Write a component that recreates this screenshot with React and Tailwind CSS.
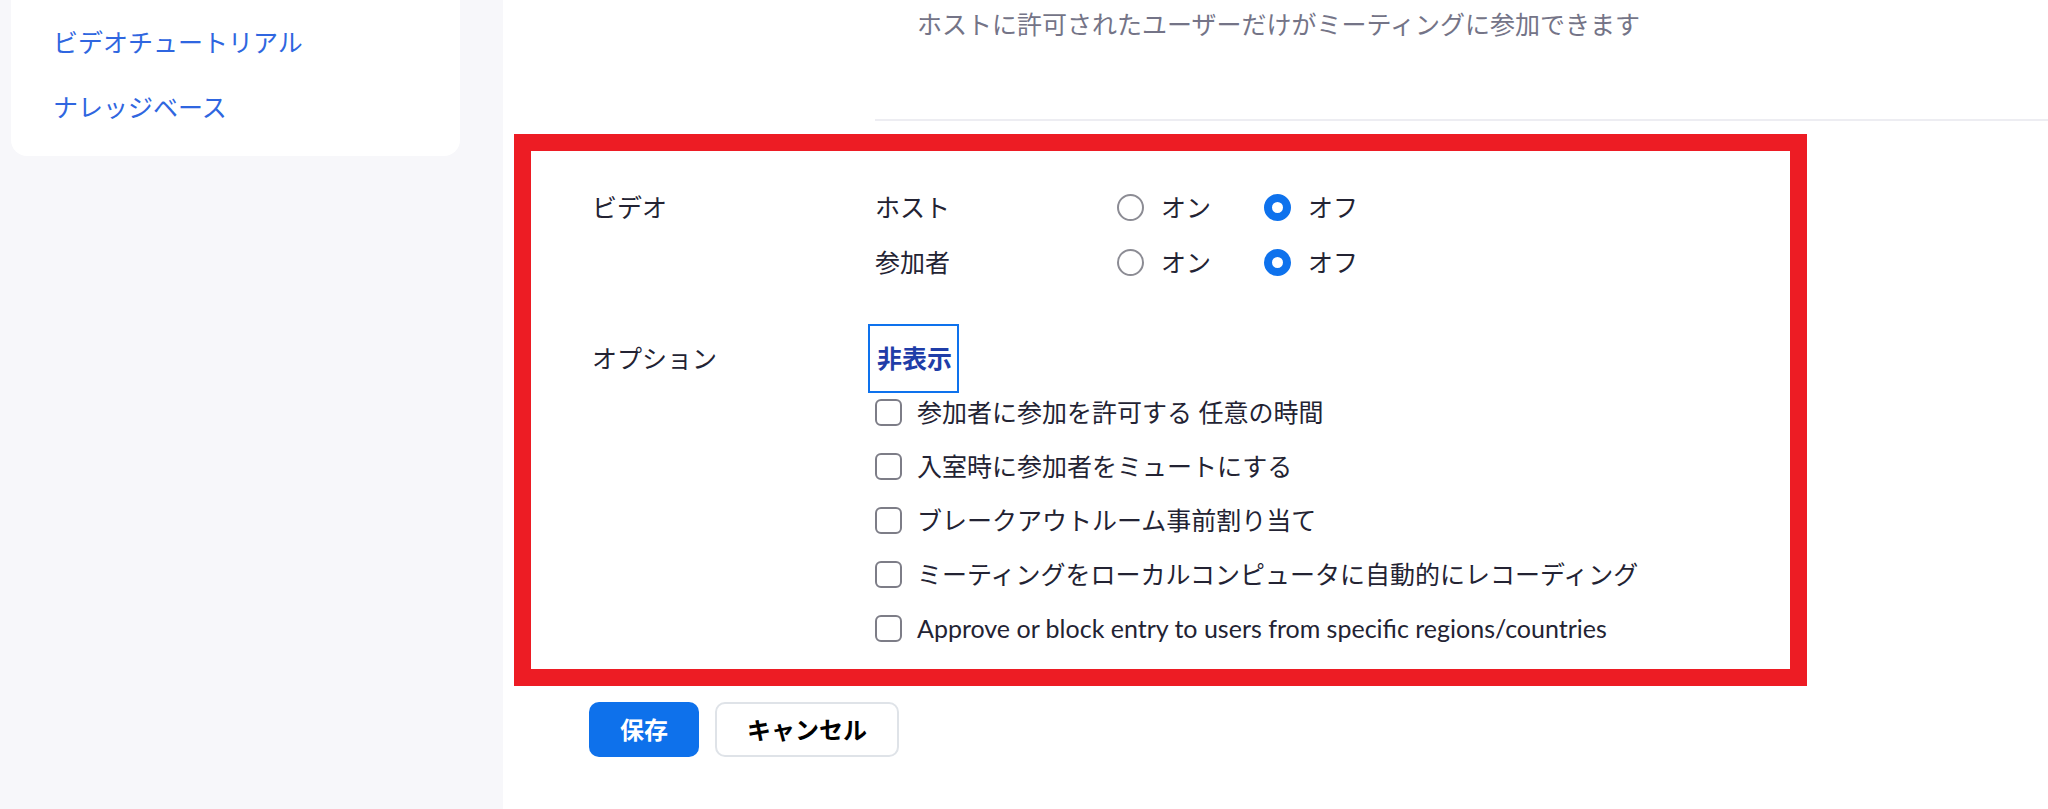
const FONT = { fontFamily: "Lato, 'Noto Sans CJK JP', sans-serif" }

function Radio({ checked, label }) {
  return (
    <label className="flex items-center w-[147px] shrink-0">
      {checked ? (
        <span className="w-[27px] h-[27px] rounded-full border-[8px] border-[#0e72ed] bg-white shrink-0" />
      ) : (
        <span className="w-[27px] h-[27px] rounded-full border-2 border-[#8c8c94] bg-white shrink-0" />
      )}
      <span className="ml-[17px] leading-none">{label}</span>
    </label>
  )
}

function Checkbox({ label }) {
  return (
    <label className="flex items-center h-[38px]">
      <span className="w-[27px] h-[27px] rounded-[6px] border-2 border-[#7d7d87] bg-white shrink-0" />
      <span className="ml-[15px] leading-none whitespace-nowrap">{label}</span>
    </label>
  )
}

export default function App() {
  const options = [
    '参加者に参加を許可する 任意の時間',
    '入室時に参加者をミュートにする',
    'ブレークアウトルーム事前割り当て',
    'ミーティングをローカルコンピュータに自動的にレコーディング',
    'Approve or block entry to users from specific regions/countries',
  ]

  return (
    <div className="flex w-full h-[809px] overflow-hidden bg-white" style={FONT}>
      {/* sidebar */}
      <aside className="w-[503px] shrink-0 bg-[#f7f7fa] pl-[11px] pr-[43px]">
        <div className="bg-white rounded-b-[16px] pt-[10px] pb-[16px] pl-[42px]">
          <a className="h-[65px] flex items-center text-[25px] text-[#2f66e0] leading-none">ビデオチュートリアル</a>
          <a className="h-[65px] flex items-center text-[25px] text-[#2f66e0] leading-none">ナレッジベース</a>
        </div>
      </aside>

      {/* main */}
      <main className="flex-1 min-w-0 text-[#232333] text-[25px]">
        <div className="ml-[372px] h-[121px] border-b-2 border-[#ededf2] pl-[42px] pt-[7px]">
          <p className="text-[25px] leading-[34px] text-[#747487]">ホストに許可されたユーザーだけがミーティングに参加できます</p>
        </div>

        <section className="ml-[11px] mt-[13px] w-[1293px] border-[17px] border-[#ed1c24] pl-[61px] pt-[29px] pb-[22px]">
          {/* video */}
          <div className="flex">
            <div className="w-[283px] shrink-0 h-[55px] flex items-center leading-none">ビデオ</div>
            <div className="flex flex-col">
              <div className="flex items-center h-[55px]">
                <span className="w-[242px] shrink-0 leading-none">ホスト</span>
                <Radio label="オン" />
                <Radio checked label="オフ" />
              </div>
              <div className="flex items-center h-[55px]">
                <span className="w-[242px] shrink-0 leading-none">参加者</span>
                <Radio label="オン" />
                <Radio checked label="オフ" />
              </div>
            </div>
          </div>

          {/* options */}
          <div className="flex mt-[34px]">
            <div className="w-[283px] shrink-0 h-[69px] flex items-center leading-none">オプション</div>
            <div className="flex flex-col">
              <button
                type="button"
                className="-ml-[7px] w-[91px] h-[69px] border-2 border-[#0e72ed] pl-[7px] text-left font-bold text-[#1f3da8] text-[25px] leading-none"
              >
                非表示
              </button>
              <div className="flex flex-col gap-[16px]">
                {options.map((o) => (
                  <Checkbox key={o} label={o} />
                ))}
              </div>
            </div>
          </div>
        </section>

        <div className="flex gap-[16px] ml-[86px] mt-[16px]">
          <button type="button" className="w-[110px] h-[55px] rounded-[10px] bg-[#0e71eb] text-white font-bold text-[24px]">
            保存
          </button>
          <button type="button" className="w-[184px] h-[55px] rounded-[10px] bg-white border-2 border-[#dfe3e8] text-black font-bold text-[24px]">
            キャンセル
          </button>
        </div>
      </main>
    </div>
  )
}
